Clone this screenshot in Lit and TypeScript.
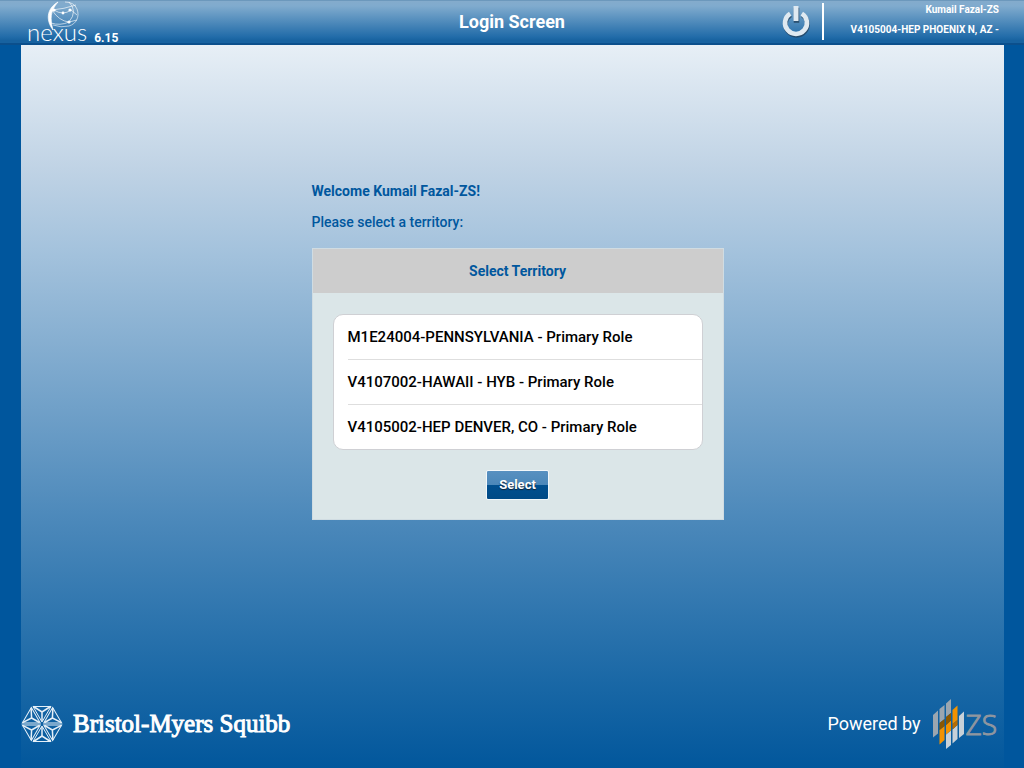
import { LitElement, html, svg, css } from "lit";
import { customElement, state } from "lit/decorators.js";

const TERRITORIES = [
  "M1E24004-PENNSYLVANIA - Primary Role",
  "V4107002-HAWAII - HYB - Primary Role",
  "V4105002-HEP DENVER, CO - Primary Role",
];

// One triangular facet of the hexagonal emblem, repeated every 60 degrees.
const facet = (angle: number) => svg`
  <g transform="rotate(${angle} 20 19)">
    <path d="M20 17 L11 1.500 H29 Z" />
    <path d="M20 16 V7 M11.500 1.500 L20 7 L28.500 1.500" stroke-width="1.500" />
  </g>`;

@customElement("app-header")
export class AppHeader extends LitElement {
  static styles = css`
    :host {
      display: block;
    }
    .bar {
      display: grid;
      grid-template-columns: 1fr auto 1fr;
      height: 45px;
      box-sizing: border-box;
      background: linear-gradient(#84abcc, #80abce 12%, #5c93c0 40%, #226ca9 85%, #1762a0 94%);
      border-bottom: 2px solid #0b4f8c;
      border-top: 1px solid #6c98bc;
      color: #fff;
    }
    .brand {
      display: flex;
      align-items: flex-end;
      gap: 7px;
      padding-left: 27px;
    }
    .logo {
      display: grid;
      justify-items: center;
    }
    .logo > * {
      grid-area: 1 / 1;
    }
    .globe {
      margin-left: 14px;
    }
    .word {
      align-self: end;
      font: 300 24px/22px Lato, sans-serif;
    }
    .version {
      font-size: 12px;
      font-weight: 700;
      line-height: 10px;
    }
    h1 {
      margin: 0;
      font-size: 18px;
      font-weight: 700;
      line-height: 42px;
    }
    .account {
      display: flex;
      justify-content: flex-end;
      align-items: flex-start;
      padding: 2px 25px 0 0;
    }
    .power {
      border: 0;
      padding: 0;
      margin-right: 11px;
      background: none;
      display: flex;
      cursor: pointer;
    }
    .user {
      border-left: 2px solid #fff;
      box-sizing: border-box;
      padding-left: 27px;
      height: 37px;
      text-align: right;
      font-size: 10px;
      font-weight: 700;
      line-height: 20px;
      display: flex;
      flex-direction: column;
      justify-content: center;
      padding-bottom: 4px;
    }
  `;

  render() {
    return html`
      <header class="bar">
        <div class="brand">
          <div class="logo">
            <svg class="globe" width="34" height="42" viewBox="0 0 34 42" fill="none" stroke="#fff">
              <path d="M11 1 C-1 8 -1 20 6 29 C3 18 3 10 11 1Z" fill="#fff" stroke-width=".7" />
              <path d="M18 1 Q27 1 30 8 C33 16 29 23 22 25 Q14 27 6 24" stroke-width=".8" opacity=".75" />
              <path d="M5 9 Q17 8 29 4 M7 9 Q16 15 24 9 L30 14 M5 9 Q12 20 22 21 M4 22 Q13 25 22 21 L30 19 M22 1 Q31 10 22 21" stroke-width=".8" opacity=".8" />
              <g fill="#fff" stroke="none">
                <circle cx="7" cy="9" r="1.6" />
                <circle cx="16" cy="12" r="1.4" />
                <circle cx="23" cy="9" r="1.6" />
                <circle cx="22" cy="21" r="1.600" />
              </g>
            </svg>
            <span class="word">nexus</span>
          </div>
          <span class="version">6.15</span>
        </div>
        <h1>Login Screen</h1>
        <div class="account">
          <button class="power" aria-label="Log out">
            <svg width="30" height="36" viewBox="0 0 30 36" fill="none">
              <g stroke="#24435f" stroke-width="4.600" opacity=".8">
                <path d="M9.200 10.600 A11 11 0 1 0 20.800 10.600" transform="translate(.5 1.400)" />
                <path d="M15 4 V19" stroke-width="5.500" transform="translate(.5 .8)" />
              </g>
              <path d="M9.200 10.600 A11 11 0 1 0 20.800 10.600" stroke="#dfe9f1" stroke-width="4.600" />
              <path d="M15 3 V18" stroke="#dfe9f1" stroke-width="5" />
            </svg>
          </button>
          <div class="user">
            <span>Kumail Fazal-ZS</span>
            <span>V4105004-HEP PHOENIX N, AZ -</span>
          </div>
        </div>
      </header>
    `;
  }
}

@customElement("territory-picker")
export class TerritoryPicker extends LitElement {
  @state() private selected = -1;

  static styles = css`
    :host {
      display: block;
    }
    .panel {
      background: #dbe6e8;
      border: 1px solid #d0dce2;
      box-sizing: border-box;
    }
    h2 {
      margin: 0;
      background: #cdcdcd;
      color: #00579e;
      font-size: 14px;
      font-weight: 700;
      line-height: 44px;
      text-align: center;
    }
    .body {
      padding: 21px 20px 19px;
      display: flex;
      flex-direction: column;
      align-items: center;
      gap: 20px;
    }
    .list {
      box-sizing: border-box;
      width: 100%;
      margin: 0;
      padding: 0 0 0 14px;
      border: 1px solid #cfd0d4;
      border-radius: 10px;
      background: #fff;
      color: #000;
    }
    .row {
      display: block;
      font-size: 15px;
      font-weight: 500;
      line-height: 44px;
      cursor: pointer;
    }
    .row + .row {
      border-top: 1px solid #dedede;
    }
    .row input {
      appearance: none;
      width: 0;
      height: 0;
      margin: 0;
      float: left;
    }
    .select {
      height: 30px;
      padding: 0 12px;
      border: 1px solid #f2f7fa;
      border-radius: 2px;
      background: linear-gradient(#5890c0, #4b87b9 50%, #004f8f 50%, #004a86);
      color: #fff;
      font: 700 13px/28px Roboto, sans-serif;
      text-shadow: 0 1px 1px #123;
      cursor: pointer;
    }
  `;

  render() {
    return html`
      <section class="panel">
        <h2>Select Territory</h2>
        <div class="body">
          <div class="list" role="radiogroup" aria-label="Select Territory">
            ${TERRITORIES.map(
              (name, i) => html`
                <label class="row">
                  <input
                    type="radio"
                    name="territory"
                    .checked=${this.selected === i}
                    @change=${() => (this.selected = i)}
                  />${name}
                </label>
              `
            )}
          </div>
          <button class="select">Select</button>
        </div>
      </section>
    `;
  }
}

@customElement("app-footer")
export class AppFooter extends LitElement {
  static styles = css`
    :host {
      display: block;
    }
    footer {
      display: flex;
      justify-content: space-between;
      align-items: center;
      padding: 0 7px 19px 0;
      color: #fff;
    }
    .company,
    .powered {
      display: flex;
      align-items: center;
    }
    .company {
      gap: 10px;
      font: 25px/30px "Liberation Serif", serif;
      -webkit-text-stroke: 1px #fff;
    }
    .powered {
      gap: 12px;
      font-size: 18px;
      line-height: 20px;
    }
    .zs {
      display: flex;
      align-items: center;
      gap: 2px;
      color: #8f969f;
      font: 300 28px/30px "Open Sans", sans-serif;
      -webkit-text-stroke: 1px #8f969f;
    }
  `;

  render() {
    return html`
      <footer>
        <div class="company">
          <svg width="42" height="38" viewBox="-1 0 42 38" fill="none" stroke="#e6f0f8">
            ${[0, 60, 120, 180, 240, 300].map(facet)}
          </svg>
          <span>Bristol-Myers Squibb</span>
        </div>
        <div class="powered">
          <span>Powered by</span>
          <span class="zs">
            <svg width="31" height="50" viewBox="0 0 31 50">
              <g fill="#9ba6b0">
                <path d="M0 16 L5 11.5 V34.500 L0 38.500Z" />
                <path d="M6.500 10 L11.500 6 V20 L6.500 24Z" />
                <path d="M13 4.500 L18 0 V14 L13 18Z" />
              </g>
              <g fill="#c8d1d8">
                <path d="M13 35.500 L18 31.500 V46 L13 50Z" />
                <path d="M19.500 30.500 L24.500 26 V40 L19.500 44.500Z" />
                <path d="M26 17 L31 12.500 V35 L26 39Z" />
              </g>
              <g fill="#f39200">
                <path d="M6.500 31 L11.500 27 V41 L6.500 45.500Z" />
                <path d="M13 26 L18 21.500 V31.500 L13 35.500Z" />
                <path d="M19.500 11 L24.500 6.500 V21 L19.500 25Z" />
              </g>
              <g fill="#8d5800">
                <path d="M6.500 24 L11.500 20 V27 L6.500 31Z" />
                <path d="M13 18 L18 14 V21.500 L13 26Z" />
              </g>
              <path d="M19.500 25 L24.500 21 V26 L19.500 30.500Z" fill="#b96d00" />
            </svg>
            ZS
          </span>
        </div>
      </footer>
    `;
  }
}

@customElement("app-root")
export class AppRoot extends LitElement {
  static styles = css`
    :host {
      display: flex;
      flex-direction: column;
      min-height: 100vh;
      background: #00569d;
      font-family: Roboto, sans-serif;
    }
    .page {
      flex: 1;
      display: flex;
      flex-direction: column;
      margin: 0 20px 0 21px;
      background: linear-gradient(
        #e7eff6,
        #c0d3e5 17%,
        #a5c3dd 28%,
        #4b88ba 66%,
        #1a68a6 88%,
        #02579c
      );
    }
    main {
      flex: 1;
      padding: 136px 0 0 10px;
      color: #00579e;
      font-size: 14px;
      line-height: 21px;
    }
    .content {
      width: 90%;
      max-width: 412px;
      margin: 0 auto;
    }
    p {
      margin: 0 0 10px;
    }
    .welcome {
      font-weight: 700;
    }
    .prompt {
      font-weight: 500;
      margin-bottom: 15px;
    }
  `;

  render() {
    return html`
      <app-header></app-header>
      <div class="page">
        <main>
          <div class="content">
            <p class="welcome">Welcome Kumail Fazal-ZS!</p>
            <p class="prompt">Please select a territory:</p>
            <territory-picker></territory-picker>
          </div>
        </main>
        <app-footer></app-footer>
      </div>
    `;
  }
}
